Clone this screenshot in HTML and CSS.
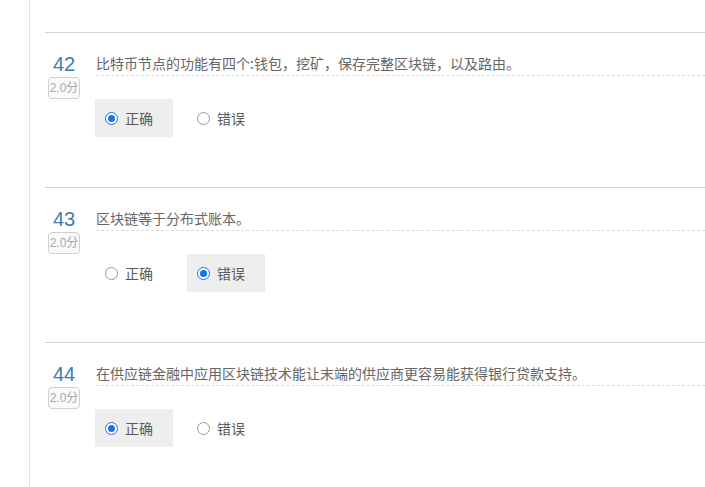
FILE: index.html
```html
<!DOCTYPE html>
<html lang="zh-CN">
<head>
<meta charset="utf-8">
<title>题目</title>
<link rel="stylesheet" href="styles.css">
</head>
<body>
<div class="page">
  <div class="question">
    <div class="qhead">
      <div class="num">42</div>
      <div class="score">2.0分</div>
    </div>
    <div class="qbody">
      <div class="title">比特币节点的功能有四个:钱包，挖矿，保存完整区块链，以及路由。</div>
      <div class="options">
        <div class="opt on"><span class="radio"></span><span class="label">正确</span></div>
        <div class="opt"><span class="radio"></span><span class="label">错误</span></div>
      </div>
    </div>
  </div>
  <div class="question">
    <div class="qhead">
      <div class="num">43</div>
      <div class="score">2.0分</div>
    </div>
    <div class="qbody">
      <div class="title">区块链等于分布式账本。</div>
      <div class="options">
        <div class="opt"><span class="radio"></span><span class="label">正确</span></div>
        <div class="opt on"><span class="radio"></span><span class="label">错误</span></div>
      </div>
    </div>
  </div>
  <div class="question">
    <div class="qhead">
      <div class="num">44</div>
      <div class="score">2.0分</div>
    </div>
    <div class="qbody">
      <div class="title">在供应链金融中应用区块链技术能让末端的供应商更容易能获得银行贷款支持。</div>
      <div class="options">
        <div class="opt on"><span class="radio"></span><span class="label">正确</span></div>
        <div class="opt"><span class="radio"></span><span class="label">错误</span></div>
      </div>
    </div>
  </div>
</div>
</body>
</html>
```

FILE: styles.css
```css
html, body {
  margin: 0;
  padding: 0;
  background: #fff;
  height: 100%;
  overflow: hidden;
}
body {
  font-family: "Liberation Sans", "Noto Sans CJK SC", sans-serif;
  color: #555;
}
.page {
  margin-left: 29px;
  border-left: 1px solid #e3e3e3;
  min-height: 100%;
  padding-top: 32px;
  box-sizing: border-box;
}
.question {
  margin-left: 15px;
  border-top: 1px solid #d2d2d2;
  padding: 19px 0 50px 0;
  display: flex;
}
.qhead {
  width: 38px;
  margin-right: 13px;
  display: flex;
  flex-direction: column;
  align-items: center;
  flex-shrink: 0;
}
.num {
  font-family: "Liberation Sans", Arial, sans-serif;
  font-size: 20px;
  line-height: 24px;
  color: #3f7bb0;
}
.score {
  margin-top: 1px;
  font-size: 12px;
  line-height: 20px;
  color: #a8a8a8;
  border: 1px solid #d0d0d0;
  border-radius: 4px;
  padding: 0 1px;
  background: #fafafa;
}
.qbody {
  flex: 1;
}
.title {
  font-family: "Noto Sans CJK SC", sans-serif;
  font-size: 14px;
  line-height: 23px;
  color: #666;
  border-bottom: 1px dashed #dcdcdc;
}
.options {
  margin-top: 23px;
  display: flex;
  gap: 14px;
  margin-left: -1px;
}
.opt {
  width: 78px;
  height: 38px;
  display: flex;
  align-items: center;
  padding-left: 10px;
  box-sizing: border-box;
}
.opt.on {
  background: #eeeeee;
}
.radio {
  width: 13px;
  height: 13px;
  border: 1px solid #9a9a9a;
  border-radius: 50%;
  box-sizing: border-box;
  background: #fff;
  margin-right: 7px;
  position: relative;
}
.opt.on .radio {
  border: 1px solid #1a73e8;
}
.opt.on .radio::after {
  content: "";
  position: absolute;
  left: 2px;
  top: 2px;
  width: 7px;
  height: 7px;
  border-radius: 50%;
  background: #1a73e8;
}
.label {
  font-family: "Noto Sans CJK SC", sans-serif;
  font-size: 14px;
  color: #5a5a5a;
}
```
